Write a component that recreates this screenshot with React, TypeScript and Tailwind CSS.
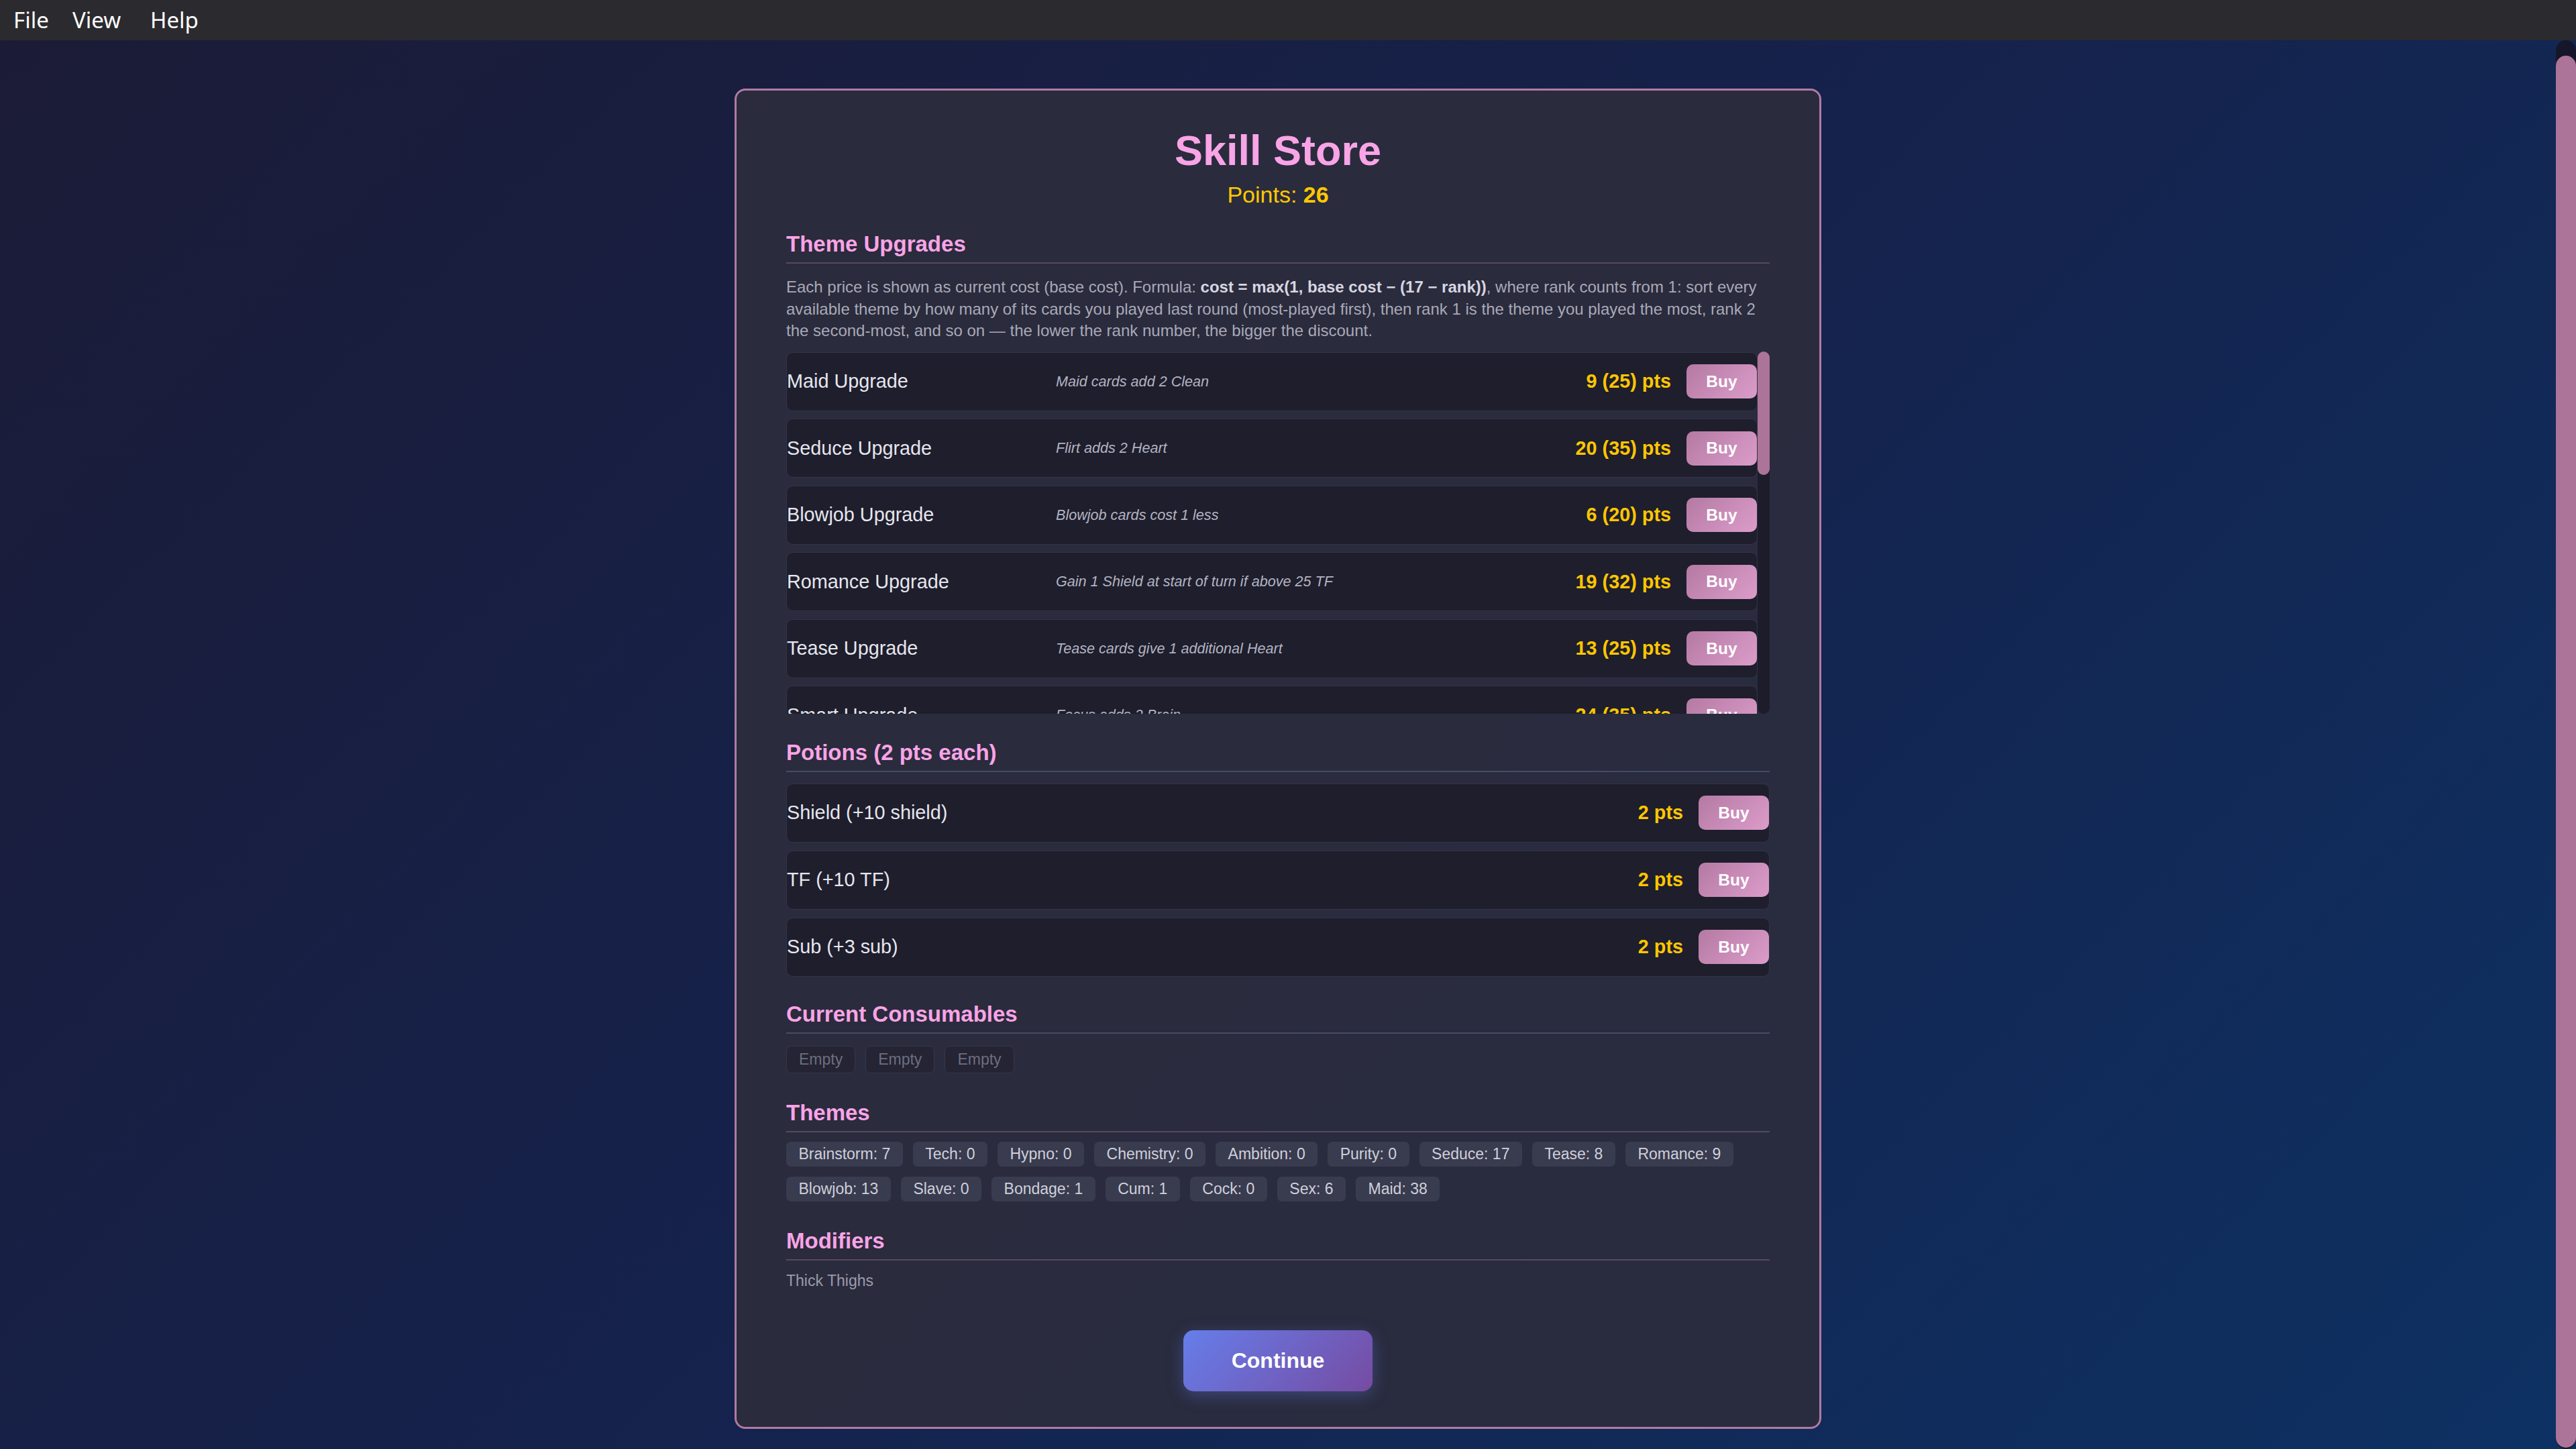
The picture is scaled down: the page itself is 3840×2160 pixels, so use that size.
import { useLayoutEffect, useRef } from 'react';

interface Upgrade {
  name: string;
  desc: string;
  cost: number;
  base: number;
}

const upgrades: Upgrade[] = [
  { name: 'Maid Upgrade', desc: 'Maid cards add 2 Clean', cost: 9, base: 25 },
  { name: 'Seduce Upgrade', desc: 'Flirt adds 2 Heart', cost: 20, base: 35 },
  { name: 'Blowjob Upgrade', desc: 'Blowjob cards cost 1 less', cost: 6, base: 20 },
  { name: 'Romance Upgrade', desc: 'Gain 1 Shield at start of turn if above 25 TF', cost: 19, base: 32 },
  { name: 'Tease Upgrade', desc: 'Tease cards give 1 additional Heart', cost: 13, base: 25 },
  { name: 'Smart Upgrade', desc: 'Focus adds 2 Brain', cost: 24, base: 35 },
  { name: 'Sex Upgrade', desc: 'Sex cards add 1 extra TF', cost: 20, base: 30 },
  { name: 'Bondage Upgrade', desc: 'Restrain adds 1 Sub', cost: 21, base: 30 },
  { name: 'Cum Upgrade', desc: 'Cum cards heal 2 Shield', cost: 19, base: 27 },
  { name: 'Tech Upgrade', desc: 'Gadget cards draw 1 card', cost: 23, base: 30 },
  { name: 'Hypno Upgrade', desc: 'Trance lasts 1 extra turn', cost: 22, base: 28 },
  { name: 'Chemistry Upgrade', desc: 'Potions give 2 extra points', cost: 20, base: 25 },
  { name: 'Ambition Upgrade', desc: 'Ambition cards add 1 Brain', cost: 26, base: 30 },
  { name: 'Purity Upgrade', desc: 'Purity cards remove 1 TF', cost: 22, base: 25 },
  { name: 'Slave Upgrade', desc: 'Obey adds 2 Sub', cost: 23, base: 25 },
  { name: 'Cock Upgrade', desc: 'Cock cards add 1 Heart', cost: 29, base: 30 },
];

const potions = [
  { name: 'Shield (+10 shield)', cost: 2 },
  { name: 'TF (+10 TF)', cost: 2 },
  { name: 'Sub (+3 sub)', cost: 2 },
];

const themes: [string, number][] = [
  ['Brainstorm', 7],
  ['Tech', 0],
  ['Hypno', 0],
  ['Chemistry', 0],
  ['Ambition', 0],
  ['Purity', 0],
  ['Seduce', 17],
  ['Tease', 8],
  ['Romance', 9],
  ['Blowjob', 13],
  ['Slave', 0],
  ['Bondage', 1],
  ['Cum', 1],
  ['Cock', 0],
  ['Sex', 6],
  ['Maid', 38],
];

function BuyButton() {
  return (
    <button className="h-[51px] w-[105px] shrink-0 rounded-[10px] bg-[linear-gradient(135deg,#b47aa3,#dc9ccb)] text-[24.5px] font-bold leading-none text-white">
      Buy
    </button>
  );
}

function SectionTitle({ children, line, className }: { children: React.ReactNode; line: string; className: string }) {
  return (
    <h2
      className={`border-b-2 pb-[8px] text-[33px] font-bold leading-[38px] text-[#f8a4e6] ${line} ${className}`}
    >
      {children}
    </h2>
  );
}

// pink scrollbar drawn next to a scroll area (native bars are hidden)
function ScrollRail({ width, thumb, className }: { width: string; thumb: string; className: string }) {
  return (
    <div className={`flex shrink-0 flex-col rounded-full ${width} ${className}`}>
      <div className={`w-full rounded-full bg-[#ad7499] ${thumb}`} />
    </div>
  );
}

export default function App() {
  const scrollRef = useRef<HTMLDivElement>(null);

  useLayoutEffect(() => {
    if (scrollRef.current) {
      scrollRef.current.scrollTop = scrollRef.current.scrollHeight;
    }
  }, []);

  return (
    <div className="flex h-screen flex-col font-['Liberation_Sans',Arial,sans-serif]">
      {/* menu bar */}
      <div className="flex h-[60px] shrink-0 items-center bg-[#2b2a2f] pl-[20px] font-['Noto_Sans',sans-serif] text-[33px] text-white">
        <span className="w-[88px]">File</span>
        <span className="w-[116px]">View</span>
        <span>Help</span>
      </div>

      <div className="flex min-h-0 flex-1 bg-[linear-gradient(135deg,#1b1b36,#15224c,#0d3163)]">
        <div
          ref={scrollRef}
          className="flex-1 overflow-y-auto pb-[30px] pt-[98px] [scrollbar-width:none]"
        >
          <div className="mx-auto w-[1620px] rounded-[16px] border-[3px] border-[#b07aa4] bg-[rgba(44,44,60,0.9)] px-[74px] pb-[53px] pt-[53px]">
            <h1 className="text-center text-[63px] font-bold leading-[72px] text-[#f8a4e6]">Skill Store</h1>
            <div className="mt-[10px] text-center text-[34px] leading-[40px] text-[#ffc800]">
              Points: <span className="font-bold">26</span>
            </div>

            <SectionTitle line="border-[#56495f]" className="mt-[35px]">
              Theme Upgrades
            </SectionTitle>
            <p className="mt-[19px] text-[24px] leading-[32.6px] text-[#a9a9b8]">
              Each price is shown as current cost (base cost). Formula:{' '}
              <strong className="text-[#d6d6e0]">cost = max(1, base cost − (17 − rank))</strong>, where rank counts from
              1: sort every available theme by how many of its cards you played last round (most-played first), then rank
              1 is the theme you played the most, rank 2 the second-most, and so on — the lower the rank number, the
              bigger the discount.
            </p>

            <div className="mt-[14px] flex h-[540px]">
              <div className="flex flex-1 flex-col gap-[11.5px] overflow-y-auto pt-[1px] [scrollbar-width:none]">
                {upgrades.map((u) => (
                  <div
                    key={u.name}
                    className="flex h-[88px] shrink-0 items-center rounded-[10px] border border-[#32334a] bg-[#1e1e2c]"
                  >
                    <div className="w-[401px] shrink-0 text-[28.8px] text-[#e6e6ee]">{u.name}</div>
                    <div className="flex-1 text-[21.6px] italic text-[#b3b3c2]">{u.desc}</div>
                    <div className="mr-[23px] text-[28.8px] font-bold text-[#ffc600]">
                      {u.cost} ({u.base}) pts
                    </div>
                    <BuyButton />
                  </div>
                ))}
              </div>
              <ScrollRail width="w-[18px]" thumb="h-[184px]" className="bg-[#1c1c2a]" />
            </div>

            <SectionTitle line="border-[#444c64]" className="mt-[39px]">
              Potions (2 pts each)
            </SectionTitle>
            <div className="mt-[17px] flex flex-col gap-[12px]">
              {potions.map((p) => (
                <div
                  key={p.name}
                  className="flex h-[88px] items-center rounded-[10px] border border-[#32334a] bg-[#1e1e2c]"
                >
                  <div className="flex-1 text-[28.8px] text-[#e6e6ee]">{p.name}</div>
                  <div className="mr-[23px] text-[28.8px] font-bold text-[#ffc600]">{p.cost} pts</div>
                  <BuyButton />
                </div>
              ))}
            </div>

            <SectionTitle line="border-[#444c64]" className="mt-[37px]">
              Current Consumables
            </SectionTitle>
            <div className="mt-[18px] flex gap-[15px]">
              {[0, 1, 2].map((i) => (
                <span
                  key={i}
                  className="h-[41px] rounded-[8px] border border-[#35364a] bg-[#242434] px-[18px] text-[23px] leading-[39px] text-[#6d6e80]"
                >
                  Empty
                </span>
              ))}
            </div>

            <SectionTitle line="border-[#56495f]" className="mt-[40px]">
              Themes
            </SectionTitle>
            <div className="mt-[14px] flex flex-wrap gap-x-[15px] gap-y-[15px]">
              {themes.map(([name, count]) => (
                <span
                  key={name}
                  className="h-[37px] rounded-[7px] bg-[#393b4f] px-[18.5px] text-[23px] leading-[37px] text-[#cfd0da]"
                >
                  {name}: {count}
                </span>
              ))}
            </div>

            <SectionTitle line="border-[#56495f]" className="mt-[40px]">
              Modifiers
            </SectionTitle>
            <div className="mt-[17.5px] text-[23px] leading-[27px] text-[#9b9bac]">Thick Thighs</div>

            <div className="mt-[59.5px] flex justify-center">
              <button className="h-[91px] w-[282px] rounded-[15px] bg-[linear-gradient(135deg,#667eea,#764ba2)] text-[32px] font-bold text-white shadow-[0_6px_24px_rgba(102,126,234,0.35)]">
                Continue
              </button>
            </div>
          </div>
        </div>
        <ScrollRail width="w-[30px]" thumb="mt-auto mb-[2px] h-[2075px]" className="bg-[#16162a]" />
      </div>
    </div>
  );
}
